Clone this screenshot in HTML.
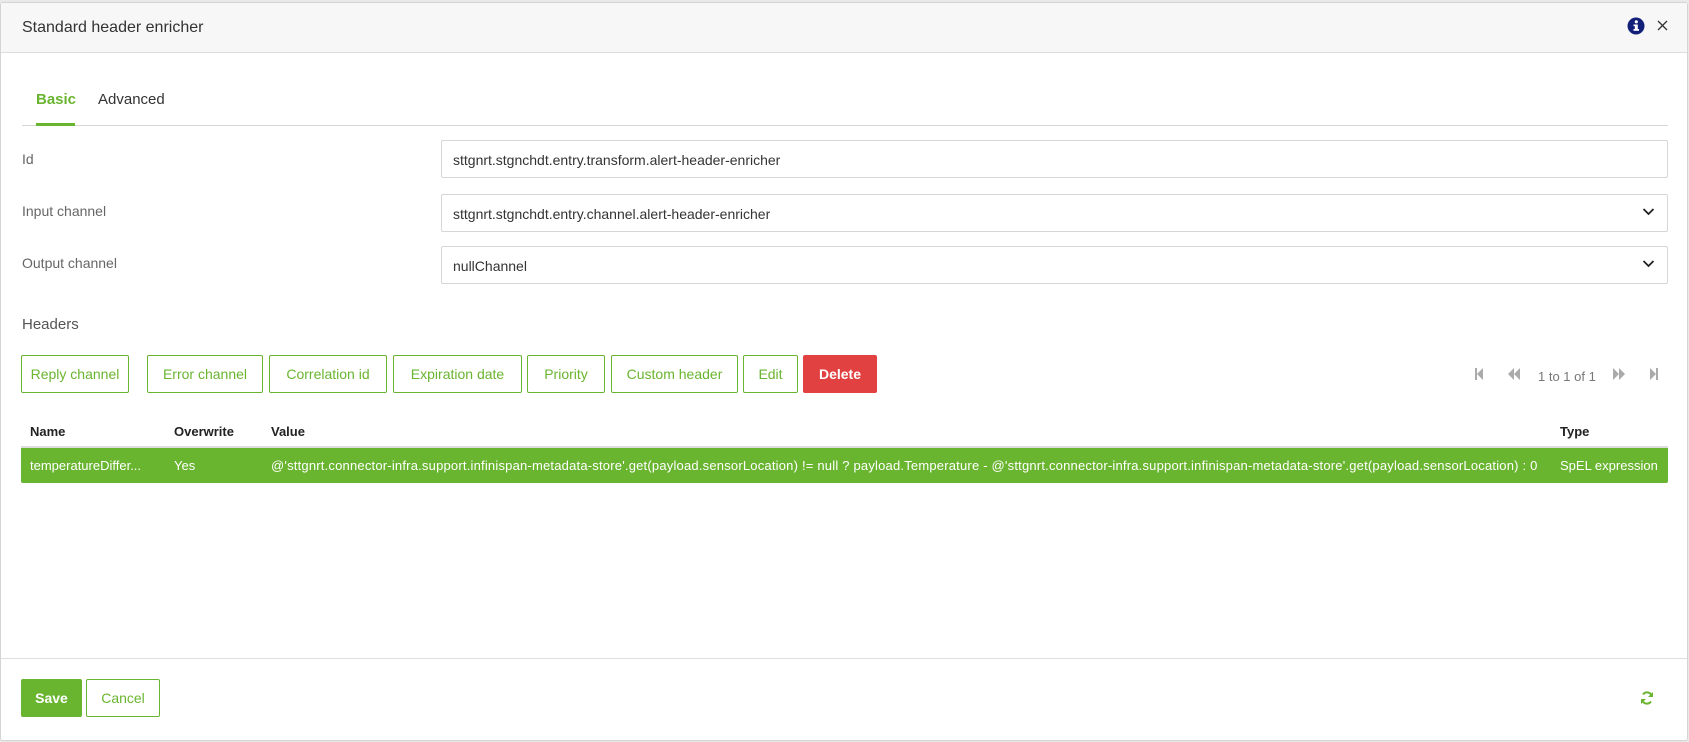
<!DOCTYPE html>
<html><head><meta charset="utf-8"><style>
*{box-sizing:border-box;margin:0;padding:0}
body{width:1689px;height:742px;background:#e9e9e9;font-family:"Liberation Sans",sans-serif;color:#333;position:relative;overflow:hidden}
.dlg{position:absolute;left:0;top:2px;width:1688px;height:739px;background:#fff;border:1px solid #d4d4d4;border-radius:3px}
.hdr{position:absolute;left:0;top:0;right:0;height:50px;background:#f7f7f7;border-bottom:1px solid #ddd}
.a{position:absolute;white-space:nowrap}
.inp{position:absolute;left:440px;width:1227px;height:38px;border:1px solid #d6d6d6;border-radius:2px;font-size:14px;padding:11px 0 0 11px;color:#333}
.chev{position:absolute;right:12px;top:12px}
.lbl{font-size:14px;color:#666}
.btn{position:absolute;top:352px;height:38px;border:1px solid #6ab530;color:#6ab530;font-size:14px;text-align:center;line-height:36px;border-radius:2px;background:#fff}
.th{font-size:13px;font-weight:bold;color:#222;top:421px}
.td{font-size:13px;color:#fff;top:455px}
</style></head><body>
<div class="dlg">
 <div class="hdr"></div>
 <div class="a" style="left:21px;top:16px;font-size:16px;color:#333">Standard header enricher</div>
 <svg class="a" style="left:1626px;top:14px" width="18" height="18" viewBox="0 0 18 18"><circle cx="9" cy="9" r="8.5" fill="#12207a"/><rect x="7.8" y="7.5" width="3" height="6" fill="#fff"/><rect x="6.5" y="12" width="5.5" height="1.8" fill="#fff"/><rect x="6.5" y="7.5" width="3" height="1.6" fill="#fff"/><circle cx="9.3" cy="4.8" r="1.6" fill="#fff"/></svg>
 <svg class="a" style="left:1656px;top:17px" width="11" height="11" viewBox="0 0 11 11"><path d="M1 1L10 10M10 1L1 10" stroke="#333" stroke-width="1.3"/></svg>

 <div class="a" style="left:35px;top:88px;font-size:15px;font-weight:bold;color:#6ab530">Basic</div>
 <div class="a" style="left:97px;top:88px;font-size:15px;color:#333">Advanced</div>
 <div class="a" style="left:21px;top:122px;width:1646px;height:1px;background:#d6d6d6"></div>
 <div class="a" style="left:35px;top:120px;width:39px;height:3px;background:#6ab530"></div>

 <div class="a lbl" style="left:21px;top:148px">Id</div>
 <div class="inp" style="top:137px">sttgnrt.stgnchdt.entry.transform.alert-header-enricher</div>
 <div class="a lbl" style="left:21px;top:200px">Input channel</div>
 <div class="inp" style="top:191px">sttgnrt.stgnchdt.entry.channel.alert-header-enricher<svg class="chev" width="13" height="9" viewBox="0 0 13 9"><path d="M1.5 2L6.5 7L11.5 2" stroke="#222" stroke-width="1.8" fill="none"/></svg></div>
 <div class="a lbl" style="left:21px;top:252px">Output channel</div>
 <div class="inp" style="top:243px">nullChannel<svg class="chev" width="13" height="9" viewBox="0 0 13 9"><path d="M1.5 2L6.5 7L11.5 2" stroke="#222" stroke-width="1.8" fill="none"/></svg></div>

 <div class="a" style="left:21px;top:313px;font-size:15px;color:#555">Headers</div>

 <div class="btn" style="left:20px;width:108px">Reply channel</div>
 <div class="btn" style="left:146px;width:116px">Error channel</div>
 <div class="btn" style="left:268px;width:118px">Correlation id</div>
 <div class="btn" style="left:392px;width:129px">Expiration date</div>
 <div class="btn" style="left:526px;width:78px">Priority</div>
 <div class="btn" style="left:610px;width:127px">Custom header</div>
 <div class="btn" style="left:742px;width:55px">Edit</div>
 <div class="btn" style="left:802px;width:74px;background:#e24141;border-color:#e24141;color:#fff;font-weight:bold">Delete</div>

 <svg class="a" style="left:1473px;top:365px" width="10" height="12" viewBox="0 0 10 12"><rect x="1" y="0" width="2" height="12" fill="#aaa"/><path d="M9 0L3 6L9 12Z" fill="#aaa"/></svg>
 <svg class="a" style="left:1507px;top:365px" width="13" height="12" viewBox="0 0 13 12"><path d="M6 0L0 6L6 12ZM12 0L6 6L12 12Z" fill="#aaa"/></svg>
 <div class="a" style="left:1537px;top:366px;font-size:13px;color:#777">1 to 1 of 1</div>
 <svg class="a" style="left:1611px;top:365px" width="13" height="12" viewBox="0 0 13 12"><path d="M1 0L7 6L1 12ZM7 0L13 6L7 12Z" fill="#aaa"/></svg>
 <svg class="a" style="left:1648px;top:365px" width="10" height="12" viewBox="0 0 10 12"><path d="M1 0L7 6L1 12Z" fill="#aaa"/><rect x="7" y="0" width="2" height="12" fill="#aaa"/></svg>

 <div class="a th" style="left:29px">Name</div>
 <div class="a th" style="left:173px">Overwrite</div>
 <div class="a th" style="left:270px">Value</div>
 <div class="a th" style="left:1559px">Type</div>
 <div class="a" style="left:20px;top:443px;width:1647px;height:2px;background:#ddd"></div>
 <div class="a" style="left:20px;top:445px;width:1647px;height:35px;background:#6ab530;border-radius:0 0 2px 2px"></div>
 <div class="a td" style="left:29px">temperatureDiffer...</div>
 <div class="a td" style="left:173px">Yes</div>
 <div class="a td" style="left:270px;letter-spacing:0.2px">@'sttgnrt.connector-infra.support.infinispan-metadata-store'.get(payload.sensorLocation) != null ? payload.Temperature - @'sttgnrt.connector-infra.support.infinispan-metadata-store'.get(payload.sensorLocation) : 0</div>
 <div class="a td" style="left:1559px">SpEL expression</div>

 <div class="a" style="left:0;top:655px;width:1686px;height:1px;background:#ddd"></div>
 <div class="a" style="left:20px;top:676px;width:61px;height:38px;background:#6ab530;color:#fff;font-weight:bold;font-size:14px;text-align:center;line-height:38px;border-radius:2px">Save</div>
 <div class="a" style="left:85px;top:676px;width:74px;height:38px;border:1px solid #6ab530;color:#6ab530;font-size:14px;text-align:center;line-height:36px;border-radius:2px">Cancel</div>
 <svg class="a" style="left:1639px;top:688px" width="14" height="14" viewBox="0 0 14 14"><path d="M12 5.5A5 5 0 0 0 3 3.5" stroke="#6ab530" stroke-width="2" fill="none"/><path d="M2 8.5A5 5 0 0 0 11 10.5" stroke="#6ab530" stroke-width="2" fill="none"/><path d="M13 1V6H8Z" fill="#6ab530"/><path d="M1 13V8H6Z" fill="#6ab530"/></svg>
</div>
</body></html>
